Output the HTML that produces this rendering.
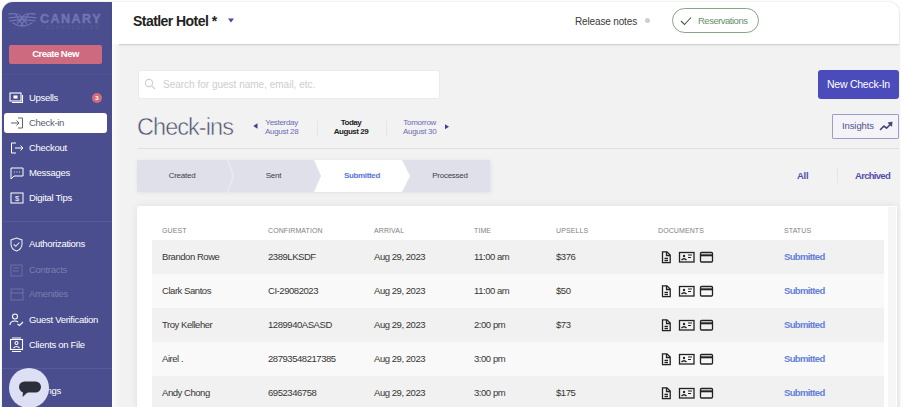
<!DOCTYPE html>
<html><head><meta charset="utf-8">
<style>
*{box-sizing:border-box;margin:0;padding:0}
html,body{width:903px;height:407px;overflow:hidden;background:#fff;font-family:"Liberation Sans",sans-serif;position:relative}
.a{position:absolute;white-space:nowrap}
#main{position:absolute;left:112px;top:2px;width:787px;height:420px;background:#f2f2f2;border-radius:0 11px 0 0}
#side{position:absolute;left:2px;top:2px;width:110px;height:420px;background:#4a4e8e;border-radius:11px 0 0 0}
#head{position:absolute;left:112px;top:2px;width:787px;height:42px;background:#fff;border-radius:0 11px 0 0;box-shadow:0 1px 1px rgba(0,0,0,0.10),0 2px 3px rgba(0,0,0,0.05)}
.nav{position:absolute;left:29px;color:#fff;font-size:9.5px;letter-spacing:-0.3px}
.dim{color:rgba(255,255,255,0.28)}
.ico{position:absolute}
.row{position:absolute;left:152px;width:732px;height:34px}
.g{background:#f1f1f1}
.w{background:#f9f9f9}
.c{position:absolute;font-size:9.5px;color:#363636;letter-spacing:-0.45px;white-space:nowrap}
.th{position:absolute;top:227px;font-size:7px;color:#828282;letter-spacing:0.1px}
.sub{color:#6480d8;font-weight:bold;letter-spacing:-0.65px}
.step{position:absolute;top:160px;height:32px;font-size:8px;color:#404040;letter-spacing:-0.25px;text-align:center;line-height:32px}
</style></head><body>
<div class="a" style="left:2px;top:2px;width:897px;height:420px;border-radius:11px 11px 0 0;box-shadow:0 0 2px 0.5px rgba(0,0,0,0.07)"></div>
<div id="main"></div>
<div id="side"></div>
<div id="head"></div>
<div class="a" style="left:112px;top:44px;width:7px;height:370px;background:linear-gradient(to right,#fbfbfb,#f2f2f2)"></div>

<!-- sidebar content -->
<svg class="ico" style="left:4px;top:8px" width="36" height="24" viewBox="0 0 36 24" fill="none" stroke="#7174b4" stroke-width="1.3" stroke-linecap="round">
  <path d="M5 6 Q9 5 14 6.5"/><path d="M21 6.5 Q26 5 31 6"/><path d="M5 9.8 Q18 7.8 32 9.8"/><path d="M6 12.8 Q18 11 31 12.8"/><path d="M9 15 Q18 21 28 15"/>
  <path d="M12 7 L19 17.5"/><path d="M24 7 L17 17.5"/><path d="M16 7.5 L22.5 15"/><path d="M20 7.5 L13.5 15"/>
</svg>
<div class="a" style="left:40px;top:12px;font-size:12.5px;font-weight:bold;color:#7074b2;letter-spacing:1.5px;-webkit-text-stroke:0.5px #7074b2">CANARY</div>
<div class="a" style="left:41px;top:24px;font-size:5px;color:#5a5d9c;letter-spacing:1.6px">TECHNOLOGIES</div>

<div class="a" style="left:9px;top:45px;width:93px;height:19px;background:#cd6a7f;border-radius:2px;color:#fff;font-size:9.5px;font-weight:bold;text-align:center;line-height:17.5px;letter-spacing:-0.5px">Create New</div>
<div class="a" style="left:2px;top:74px;width:110px;height:1px;background:#4e5292"></div>

<!-- Upsells -->
<svg class="ico" style="left:9px;top:92px" width="15" height="12" viewBox="0 0 15 12" fill="none" stroke="#fff" stroke-width="1.1"><rect x="1" y="1" width="11" height="8"/><path d="M13.5 3 V10.5 H3"/><rect x="5" y="4" width="3" height="2" fill="#fff"/></svg>
<div class="nav" style="top:92px">Upsells</div>
<div class="a" style="left:92px;top:93px;width:10px;height:10px;border-radius:50%;background:#d46b7b;color:#fff;font-size:6px;text-align:center;line-height:10px;font-weight:bold">3</div>

<!-- Check-in active -->
<div class="a" style="left:4px;top:113px;width:103px;height:20px;background:#fff;border-radius:3px"></div>
<svg class="ico" style="left:10px;top:117px" width="14" height="12" viewBox="0 0 14 12" fill="none" stroke="#5f6275" stroke-width="1"><path d="M8 1 H12.5 V11 H8"/><path d="M1 6 H9 M6.5 3.5 L9 6 L6.5 8.5"/></svg>
<div class="nav" style="top:117px;color:#585b70">Check-in</div>

<!-- Checkout -->
<svg class="ico" style="left:10px;top:142px" width="14" height="12" viewBox="0 0 14 12" fill="none" stroke="#fff" stroke-width="1"><path d="M6 1 H1.5 V11 H6"/><path d="M5 6 H13 M10.5 3.5 L13 6 L10.5 8.5"/></svg>
<div class="nav" style="top:142px">Checkout</div>

<!-- Messages -->
<svg class="ico" style="left:10px;top:167px" width="14" height="13" viewBox="0 0 14 13" fill="none" stroke="#fff" stroke-width="1"><path d="M1 1 H13 V9 H4 L1 12 Z"/><path d="M4 5 H4.8 M6.6 5 H7.4 M9.2 5 H10"/></svg>
<div class="nav" style="top:167px">Messages</div>

<!-- Digital Tips -->
<svg class="ico" style="left:10px;top:192px" width="14" height="12" viewBox="0 0 14 12" fill="none" stroke="#fff" stroke-width="1"><rect x="1" y="1" width="12" height="10"/><text x="7" y="8.8" font-size="7.5" fill="#fff" stroke="none" text-anchor="middle" font-family="Liberation Sans">$</text></svg>
<div class="nav" style="top:192px">Digital Tips</div>

<div class="a" style="left:2px;top:221px;width:110px;height:1px;background:#56599a"></div>

<!-- Authorizations -->
<svg class="ico" style="left:10px;top:237px" width="14" height="15" viewBox="0 0 14 15" fill="none" stroke="#e8e9f5" stroke-width="1.1"><path d="M6.5 1 L12 3 V7 Q12 12 6.5 14 Q1 12 1 7 V3 Z"/><path d="M3.8 7.5 L5.8 9.3 L9.3 5.5"/></svg>
<div class="nav" style="top:238px">Authorizations</div>

<svg class="ico" style="left:10px;top:264px" width="14" height="13" viewBox="0 0 14 13" fill="none" stroke="rgba(255,255,255,0.2)" stroke-width="1"><rect x="1" y="1" width="11" height="11"/><path d="M3 4 H9 M3 7 H9"/></svg>
<div class="nav dim" style="top:264px">Contracts</div>
<svg class="ico" style="left:10px;top:288px" width="14" height="13" viewBox="0 0 14 13" fill="none" stroke="rgba(255,255,255,0.2)" stroke-width="1"><rect x="1" y="1" width="12" height="11"/><path d="M1 5 H13"/></svg>
<div class="nav dim" style="top:288px">Amenities</div>

<!-- Guest Verification -->
<svg class="ico" style="left:9px;top:313px" width="15" height="14" viewBox="0 0 15 14" fill="none" stroke="#fff" stroke-width="1.1"><circle cx="6" cy="3.5" r="2.5"/><path d="M1 12 Q1 8 6 8 Q8 8 9 9"/><path d="M8.5 11 L10.5 12.5 L14 9"/></svg>
<div class="nav" style="top:314px">Guest Verification</div>

<!-- Clients on File -->
<svg class="ico" style="left:9px;top:337px" width="15" height="16" viewBox="0 0 15 16" fill="none" stroke="#fff" stroke-width="1.1"><rect x="1.5" y="2.5" width="12" height="10"/><path d="M3 1 H12 M3 14.5 H12"/><circle cx="7.5" cy="6" r="1.5"/><path d="M4.5 11 Q7.5 8 10.5 11"/></svg>
<div class="nav" style="top:339px">Clients on File</div>

<div class="a" style="left:2px;top:368px;width:110px;height:1px;background:#56599a"></div>
<div class="nav" style="top:385px">Settings</div>

<!-- chat bubble -->
<div class="a" style="left:9px;top:368px;width:40px;height:40px;border-radius:50%;background:#dde0f4"></div>
<svg class="ico" style="left:18px;top:380px" width="24" height="18" viewBox="0 0 24 18"><rect x="1" y="1.5" width="22" height="11" rx="5.5" fill="#2b2e3b"/><path d="M5 12 L4.5 17 L10 12 Z" fill="#2b2e3b"/></svg>

<!-- header -->
<div class="a" style="left:133px;top:13px;font-size:14px;font-weight:bold;color:#222;letter-spacing:-0.55px">Statler Hotel *</div>
<svg class="ico" style="left:227px;top:18px" width="8" height="5" viewBox="0 0 8 5"><path d="M1 0.5 H7 L4 4.5 Z" fill="#4b46a8"/></svg>
<div class="a" style="left:575px;top:16px;font-size:10px;color:#3a3a3a;letter-spacing:-0.15px">Release notes</div>
<div class="a" style="left:645px;top:18px;width:5px;height:5px;border-radius:50%;background:#cfcfcf"></div>
<div class="a" style="left:672px;top:8px;width:87px;height:25px;border:1px solid #86a487;border-radius:13px"></div>
<svg class="ico" style="left:680px;top:16px" width="12" height="10" viewBox="0 0 12 10" fill="none" stroke="#3f5d42" stroke-width="1.1"><path d="M1 5 L4.5 8.5 L11 1.5"/></svg>
<div class="a" style="left:698px;top:15px;font-size:9.5px;color:#668f69;letter-spacing:-0.5px">Reservations</div>

<!-- search -->
<div class="a" style="left:138px;top:70px;width:302px;height:29px;background:#fff;border:1px solid #ebebeb;border-radius:2px"></div>
<svg class="ico" style="left:144px;top:78px" width="12" height="12" viewBox="0 0 12 12" fill="none" stroke="#cfcfcf" stroke-width="1.1"><circle cx="5" cy="5" r="3.6"/><path d="M7.8 7.8 L11 11"/></svg>
<div class="a" style="left:163px;top:79px;font-size:10px;color:#cdcdcd;letter-spacing:0px">Search for guest name, email, etc.</div>

<!-- title -->
<div class="a" style="left:137px;top:114px;font-size:23.5px;color:#4f5270;letter-spacing:-0.95px;-webkit-text-stroke:0.5px #f2f2f2">Check-ins</div>

<svg class="ico" style="left:253px;top:123px" width="5" height="6" viewBox="0 0 5 6"><path d="M4.5 0.3 V5.7 L0.3 3 Z" fill="#403e92"/></svg>
<div class="a" style="left:265px;top:118px;font-size:8px;line-height:9px;color:#6b6cb5;text-align:center;letter-spacing:-0.3px">Yesterday<br>August 28</div>
<div class="a" style="left:317px;top:121px;width:1px;height:15px;background:#e6e6e6"></div>
<div class="a" style="left:333.5px;top:118px;width:35px;font-size:8px;line-height:9px;color:#222;font-weight:bold;text-align:center;letter-spacing:-0.45px">Today<br>August 29</div>
<div class="a" style="left:386px;top:121px;width:1px;height:15px;background:#e6e6e6"></div>
<div class="a" style="left:403px;top:118px;font-size:8px;line-height:9px;color:#6b6cb5;text-align:center;letter-spacing:-0.3px">Tomorrow<br>August 30</div>
<svg class="ico" style="left:445px;top:123.5px" width="5" height="6" viewBox="0 0 5 6"><path d="M0 0.3 V5.3 L4 2.8 Z" fill="#403e92"/></svg>

<!-- buttons -->
<div class="a" style="left:818px;top:70px;width:81px;height:29px;background:#4b4bbb;border-radius:3px;color:#fff;font-size:10.5px;text-align:center;line-height:28px;letter-spacing:-0.25px">New Check-In</div>
<div class="a" style="left:832px;top:114px;width:67px;height:25px;background:#f3f3f8;border:1px solid #9c9ec9;border-radius:1px"></div>
<div class="a" style="left:842px;top:120px;font-size:9.5px;color:#525488;letter-spacing:-0.1px">Insights</div>
<svg class="ico" style="left:879px;top:121px" width="14" height="10" viewBox="0 0 14 10"><path d="M1.5 8.5 L5 5 L7.5 7.2 L11 3.8" fill="none" stroke="#3e407c" stroke-width="1.6" stroke-linecap="round" stroke-linejoin="round"/><path d="M9 1.8 L13.2 1 L12.6 5.4 Z" fill="#3e407c" stroke="#3e407c" stroke-width="0.6" stroke-linejoin="round"/></svg>

<div class="a" style="left:138px;top:148px;width:761px;height:1px;background:#e0e0e0"></div>

<!-- stepper -->
<svg class="ico" style="left:137px;top:160px;filter:drop-shadow(1px 1px 2px rgba(0,0,0,0.07))" width="360" height="34" viewBox="0 0 360 34">
  <rect x="0" y="0" width="353" height="32" fill="#e0e0ea"/>
  <path d="M90.5 0 L96.5 16 L90.5 32" fill="none" stroke="#e9e9f0" stroke-width="1.6"/>
  <path d="M177 0 H265 L273 16 L265 32 H177 L184 16 Z" fill="#ffffff"/>
</svg>
<div class="step" style="left:137px;width:90px">Created</div>
<div class="step" style="left:230px;width:87px">Sent</div>
<div class="step" style="left:318px;width:88px;color:#5c74d8;font-weight:bold;letter-spacing:-0.35px">Submitted</div>
<div class="step" style="left:406px;width:88px">Processed</div>

<div class="a" style="left:797px;top:170px;font-size:9.5px;color:#5250ac;font-weight:bold;letter-spacing:-0.3px">All</div>
<div class="a" style="left:837px;top:168px;width:1px;height:15px;background:#e6e6e6"></div>
<div class="a" style="left:855px;top:170px;font-size:9.5px;color:#5250ac;font-weight:bold;letter-spacing:-0.7px">Archived</div>

<!-- card -->
<div class="a" style="left:137px;top:206px;width:760px;height:220px;background:#fff;border-radius:3px 0 0 0;box-shadow:0 0 9px rgba(0,0,0,0.08)"></div>
<div class="a" style="left:888px;top:207px;width:8px;height:210px;background:#f6f6f6"></div>
<div class="th" style="left:162px">GUEST</div>
<div class="th" style="left:268px">CONFIRMATION</div>
<div class="th" style="left:374px">ARRIVAL</div>
<div class="th" style="left:474px">TIME</div>
<div class="th" style="left:556px">UPSELLS</div>
<div class="th" style="left:658px">DOCUMENTS</div>
<div class="th" style="left:784px">STATUS</div>

<!--ROWS-->
<div class="row g" style="top:240px"></div>
<div class="c" style="left:162px;top:251px">Brandon Rowe</div>
<div class="c" style="left:268px;top:251px">2389LKSDF</div>
<div class="c" style="left:374px;top:251px">Aug 29, 2023</div>
<div class="c" style="left:474px;top:251px">11:00 am</div>
<div class="c" style="left:556px;top:251px">$376</div>
<svg class="ico" style="left:660px;top:251px" width="56" height="13" viewBox="0 0 56 13" fill="none" stroke="#222" stroke-width="1.3"><path d="M2.5 0.8 H7 L10.2 4 V11.7 H2.5 Z"/><path d="M6.5 1 V4.5 H10"/><path d="M4.5 7.5 H8 M4.5 9.7 H8"/><rect x="19.5" y="1.5" width="14.5" height="9.5"/><circle cx="24" cy="5" r="1.2" fill="#222" stroke="none"/><path d="M21.5 9 Q24 6.5 26.5 9" stroke-width="1.4"/><path d="M28 4 H32 M28 6.5 H31" stroke-width="1"/><rect x="40.5" y="1.5" width="12" height="9.5" rx="1"/><path d="M40.5 4.3 H52.5" stroke-width="2"/></svg>
<div class="c sub" style="left:784px;top:251px">Submitted</div>
<div class="row w" style="top:274px"></div>
<div class="c" style="left:162px;top:285px">Clark Santos</div>
<div class="c" style="left:268px;top:285px">CI-29082023</div>
<div class="c" style="left:374px;top:285px">Aug 29, 2023</div>
<div class="c" style="left:474px;top:285px">11:00 am</div>
<div class="c" style="left:556px;top:285px">$50</div>
<svg class="ico" style="left:660px;top:285px" width="56" height="13" viewBox="0 0 56 13" fill="none" stroke="#222" stroke-width="1.3"><path d="M2.5 0.8 H7 L10.2 4 V11.7 H2.5 Z"/><path d="M6.5 1 V4.5 H10"/><path d="M4.5 7.5 H8 M4.5 9.7 H8"/><rect x="19.5" y="1.5" width="14.5" height="9.5"/><circle cx="24" cy="5" r="1.2" fill="#222" stroke="none"/><path d="M21.5 9 Q24 6.5 26.5 9" stroke-width="1.4"/><path d="M28 4 H32 M28 6.5 H31" stroke-width="1"/><rect x="40.5" y="1.5" width="12" height="9.5" rx="1"/><path d="M40.5 4.3 H52.5" stroke-width="2"/></svg>
<div class="c sub" style="left:784px;top:285px">Submitted</div>
<div class="row g" style="top:308px"></div>
<div class="c" style="left:162px;top:319px">Troy Kelleher</div>
<div class="c" style="left:268px;top:319px">1289940ASASD</div>
<div class="c" style="left:374px;top:319px">Aug 29, 2023</div>
<div class="c" style="left:474px;top:319px">2:00 pm</div>
<div class="c" style="left:556px;top:319px">$73</div>
<svg class="ico" style="left:660px;top:319px" width="56" height="13" viewBox="0 0 56 13" fill="none" stroke="#222" stroke-width="1.3"><path d="M2.5 0.8 H7 L10.2 4 V11.7 H2.5 Z"/><path d="M6.5 1 V4.5 H10"/><path d="M4.5 7.5 H8 M4.5 9.7 H8"/><rect x="19.5" y="1.5" width="14.5" height="9.5"/><circle cx="24" cy="5" r="1.2" fill="#222" stroke="none"/><path d="M21.5 9 Q24 6.5 26.5 9" stroke-width="1.4"/><path d="M28 4 H32 M28 6.5 H31" stroke-width="1"/><rect x="40.5" y="1.5" width="12" height="9.5" rx="1"/><path d="M40.5 4.3 H52.5" stroke-width="2"/></svg>
<div class="c sub" style="left:784px;top:319px">Submitted</div>
<div class="row w" style="top:342px"></div>
<div class="c" style="left:162px;top:353px">Airel .</div>
<div class="c" style="left:268px;top:353px">28793548217385</div>
<div class="c" style="left:374px;top:353px">Aug 29, 2023</div>
<div class="c" style="left:474px;top:353px">3:00 pm</div>
<svg class="ico" style="left:660px;top:353px" width="56" height="13" viewBox="0 0 56 13" fill="none" stroke="#222" stroke-width="1.3"><path d="M2.5 0.8 H7 L10.2 4 V11.7 H2.5 Z"/><path d="M6.5 1 V4.5 H10"/><path d="M4.5 7.5 H8 M4.5 9.7 H8"/><rect x="19.5" y="1.5" width="14.5" height="9.5"/><circle cx="24" cy="5" r="1.2" fill="#222" stroke="none"/><path d="M21.5 9 Q24 6.5 26.5 9" stroke-width="1.4"/><path d="M28 4 H32 M28 6.5 H31" stroke-width="1"/><rect x="40.5" y="1.5" width="12" height="9.5" rx="1"/><path d="M40.5 4.3 H52.5" stroke-width="2"/></svg>
<div class="c sub" style="left:784px;top:353px">Submitted</div>
<div class="row g" style="top:376px"></div>
<div class="c" style="left:162px;top:387px">Andy Chong</div>
<div class="c" style="left:268px;top:387px">6952346758</div>
<div class="c" style="left:374px;top:387px">Aug 29, 2023</div>
<div class="c" style="left:474px;top:387px">3:00 pm</div>
<div class="c" style="left:556px;top:387px">$175</div>
<svg class="ico" style="left:660px;top:387px" width="56" height="13" viewBox="0 0 56 13" fill="none" stroke="#222" stroke-width="1.3"><path d="M2.5 0.8 H7 L10.2 4 V11.7 H2.5 Z"/><path d="M6.5 1 V4.5 H10"/><path d="M4.5 7.5 H8 M4.5 9.7 H8"/><rect x="19.5" y="1.5" width="14.5" height="9.5"/><circle cx="24" cy="5" r="1.2" fill="#222" stroke="none"/><path d="M21.5 9 Q24 6.5 26.5 9" stroke-width="1.4"/><path d="M28 4 H32 M28 6.5 H31" stroke-width="1"/><rect x="40.5" y="1.5" width="12" height="9.5" rx="1"/><path d="M40.5 4.3 H52.5" stroke-width="2"/></svg>
<div class="c sub" style="left:784px;top:387px">Submitted</div>
<!--/ROWS-->
</body></html>
